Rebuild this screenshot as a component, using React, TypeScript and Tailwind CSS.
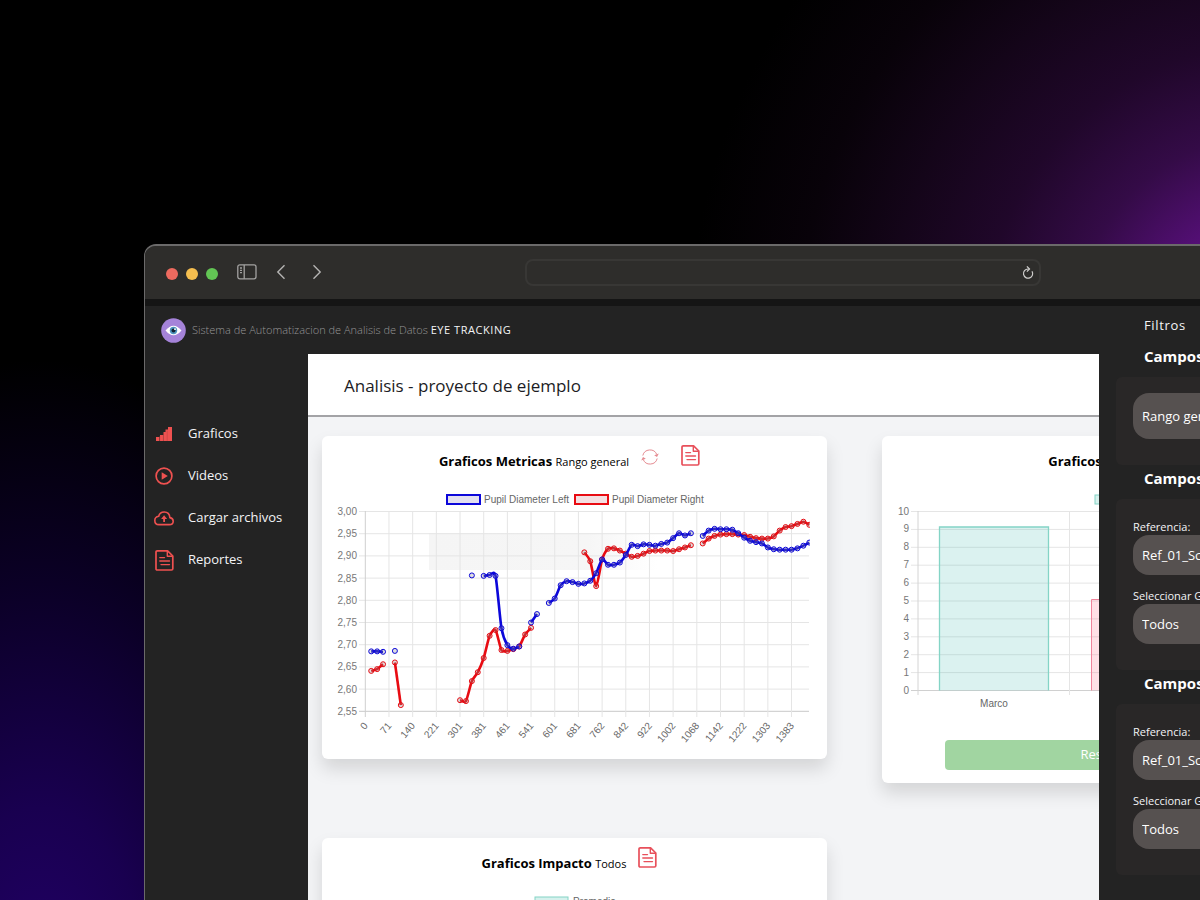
import React from "react";

type Point = [number, number];

const leftEye: Point[][] = [
  [[1, 2.685], [2, 2.685], [3, 2.684]],
  [[5, 2.686]],
  [[18, 2.856]],
  [[20, 2.855], [21, 2.857], [22, 2.855], [23, 2.737], [24, 2.699], [25, 2.691], [26, 2.696]],
  [[28, 2.75], [29, 2.769]],
  [[31, 2.794], [32, 2.804], [33, 2.834], [34, 2.843], [35, 2.841], [36, 2.837], [37, 2.838], [38, 2.844], [39, 2.861], [40, 2.892], [41, 2.88], [42, 2.88], [43, 2.885], [44, 2.902], [45, 2.925], [46, 2.922], [47, 2.926], [48, 2.925], [49, 2.923], [50, 2.927], [51, 2.93], [52, 2.94], [53, 2.951], [54, 2.946], [55, 2.951]],
  [[57, 2.945], [58, 2.957], [59, 2.961], [60, 2.96], [61, 2.96], [62, 2.959], [63, 2.951], [64, 2.941], [65, 2.934], [66, 2.931], [67, 2.928], [68, 2.919], [69, 2.915], [70, 2.914], [71, 2.914], [72, 2.914], [73, 2.917], [74, 2.923], [75, 2.93]],
];

const rightEye: Point[][] = [
  [[1, 2.641], [2, 2.645], [3, 2.656]],
  [[5, 2.66], [6, 2.564]],
  [[16, 2.575], [17, 2.573], [18, 2.618], [19, 2.638], [20, 2.67], [21, 2.72], [22, 2.733], [23, 2.688], [24, 2.686], [25, 2.69], [26, 2.696], [27, 2.723], [28, 2.738]],
  [[37, 2.908], [38, 2.888], [39, 2.832], [40, 2.892], [41, 2.916], [42, 2.917], [43, 2.912], [44, 2.905], [45, 2.898], [46, 2.9], [47, 2.905], [48, 2.911], [49, 2.912], [50, 2.912], [51, 2.912], [52, 2.911], [53, 2.915], [54, 2.919], [55, 2.924]],
  [[57, 2.928], [58, 2.939], [59, 2.945], [60, 2.948], [61, 2.949], [62, 2.949], [63, 2.948], [64, 2.947], [65, 2.943], [66, 2.94], [67, 2.939], [68, 2.939], [69, 2.944], [70, 2.957], [71, 2.965], [72, 2.967], [73, 2.972], [74, 2.977], [75, 2.97]],
];

const timeLabels = ["0", "71", "140", "221", "301", "381", "461", "541", "601", "681", "762", "842", "922", "1002", "1068", "1142", "1222", "1303", "1383"];
const diameterLabels = ["3,00", "2,95", "2,90", "2,85", "2,80", "2,75", "2,70", "2,65", "2,60", "2,55"];

const px = (i: number) => 43.3 + i * 5.92;
const py = (v: number) => 21.5 + (3 - v) * 444;

function curve(points: Point[]) {
  const p = points.map(([i, v]) => [px(i), py(v)]);
  let d = `M${p[0][0]} ${p[0][1]}`;
  for (let k = 0; k < p.length - 1; k++) {
    const a = p[Math.max(k - 1, 0)];
    const b = p[k];
    const c = p[k + 1];
    const e = p[Math.min(k + 2, p.length - 1)];
    const t = 0.12;
    d += ` C${b[0] + (c[0] - a[0]) * t} ${b[1] + (c[1] - a[1]) * t} ${c[0] - (e[0] - b[0]) * t} ${c[1] - (e[1] - b[1]) * t} ${c[0]} ${c[1]}`;
  }
  return d;
}

function Series({ data, color }: { data: Point[][]; color: string }) {
  return (
    <g stroke={color} fill="none" clipPath="url(#plot)">
      {data.map((part, k) => (
        <path key={k} d={curve(part)} strokeWidth="2.6" strokeLinejoin="round" />
      ))}
      {data.flat().map(([i, v]) => (
        <circle key={i} cx={px(i)} cy={py(v)} r="2.5" strokeWidth="1" fill="#8884" />
      ))}
    </g>
  );
}

const chartText = "font-['Liberation_Sans',Arial,sans-serif] text-[10px]";

function MetricsChart() {
  return (
    <svg viewBox="0 0 505 269" className={`block w-full ${chartText}`} role="img" aria-label="Pupil diameter">
      <defs>
        <clipPath id="plot"><rect x="40" y="15" width="448" height="210" /></clipPath>
        <linearGradient id="band" x1="0" x2="1" y1="0" y2="0">
          <stop offset="0" stopColor="#f5f5f5" />
          <stop offset="0.7" stopColor="#f6f6f6" />
          <stop offset="1" stopColor="#fff" />
        </linearGradient>
      </defs>
      <rect x="107" y="43" width="228" height="37" fill="url(#band)" />
      <g fill="#666">
        <rect x="125" y="5" width="33" height="9" fill="#e3e0f0" stroke="#0c07da" strokeWidth="2" />
        <text x="162" y="12.5">Pupil Diameter Left</text>
        <rect x="253" y="5" width="33" height="9" fill="#f3dfe1" stroke="#e80b12" strokeWidth="2" />
        <text x="290" y="12.5">Pupil Diameter Right</text>
      </g>
      {diameterLabels.map((label, k) => (
        <g key={label}>
          <path d={`M37 ${21.5 + k * 22.2}H487`} stroke={k === 9 ? "#c8c8c8" : "#e5e5e5"} />
          <text x="35" y={25 + k * 22.2} textAnchor="end" fill="#777">{label}</text>
        </g>
      ))}
      {timeLabels.map((label, k) => (
        <g key={label}>
          <path d={`M${px(k * 4)} 21V227`} stroke={k === 0 ? "#cfcfcf" : "#e5e5e5"} />
          <text transform={`translate(${px(k * 4) + 3} 236) rotate(-50)`} textAnchor="end" fill="#666">{label}</text>
        </g>
      ))}
      <Series data={rightEye} color="#e80b12" />
      <Series data={leftEye} color="#0c07da" />
    </svg>
  );
}

function AverageLegend({ x }: { x: number }) {
  return (
    <g>
      <rect x={x} y="5" width="33" height="9" fill="#d6f1ed" stroke="#84d4c6" />
      <text x={x + 38} y="12.5" fill="#666">Promedio</text>
    </g>
  );
}

function BarsChart() {
  return (
    <svg viewBox="0 0 505 232" className={`block w-full ${chartText}`} role="img" aria-label="Promedio">
      <AverageLegend x={213} />
      {Array.from({ length: 11 }, (_, k) => (
        <g key={k}>
          <path d={`M29 ${21.5 + k * 17.9}H490`} stroke={k === 10 ? "#d0d0d0" : "#e5e5e5"} />
          <text x="27" y={24.5 + k * 17.9} textAnchor="end" fill="#777">{10 - k}</text>
        </g>
      ))}
      <path d="M187.500 21V205M339.500 21V205" stroke="#e5e5e5" />
      <path d="M36 21V205" stroke="#d4d4d4" />
      <rect x="57.500" y="37" width="109" height="163.500" fill="#4bc0b333" />
      <path d="M57.500 200.500V37H166.500V200.500" fill="none" stroke="#84d4c6" strokeWidth="1.300" />
      <rect x="209.500" y="109.500" width="109" height="91" fill="#ff638433" />
      <path d="M209.500 200.500V109.500H318.500V200.500" fill="none" stroke="#f0839b" />
      <text x="112" y="217" textAnchor="middle" fill="#666">Marco</text>
    </svg>
  );
}

const ReportIcon = () => (
  <svg width="19" height="21" viewBox="0 0 19 21" fill="none" stroke="currentColor" strokeWidth="1.700" strokeLinejoin="round">
    <path d="M2.300 0.900H12.600L17.800 6V18.700Q17.800 20 16.500 20H2.300Q1 20 1 18.700V2.200Q1 0.900 2.300 0.900Z" />
    <path d="M12.300 1V6.300H17.600" strokeWidth="1.400" />
    <path d="M4.800 7.600H9.500M4.800 11H14.500M6 14.600H14.500" strokeWidth="1.400" strokeLinecap="round" />
  </svg>
);

const PlayIcon = () => (
  <svg width="18" height="18" viewBox="0 0 18 18" fill="none" stroke="currentColor" strokeWidth="1.700">
    <circle cx="9" cy="9" r="7.900" />
    <path d="M6.700 5.300L12.800 9L6.700 12.700Z" fill="currentColor" stroke="none" />
  </svg>
);

const CloudIcon = () => (
  <svg width="20" height="15" viewBox="0 0 20 15" fill="none" stroke="currentColor" strokeWidth="1.600" strokeLinejoin="round">
    <path d="M5 13.600H15.300C17.700 13.600 19.200 12.100 19.200 10.200C19.200 8.300 17.900 7 15.900 6.600C15.600 3.200 13.300 1 10.200 1C7.400 1 5.300 2.600 4.700 5.200C2.300 5.600 0.800 7.200 0.800 9.400C0.800 11.900 2.500 13.600 5 13.600Z" />
    <path d="M10.100 11V7" strokeWidth="1.800" />
    <path d="M10.100 4.300L13.100 8H7.100Z" fill="currentColor" stroke="none" />
  </svg>
);

const GraphIcon = () => (
  <svg width="16" height="14" viewBox="0 0 16 14" fill="#ef5150">
    <path d="M0 10h3.500v4H0zM4 8h3.300v6H4zM7.500 5h3.500v9H7.500zM9.500 2.500h3V14h-3zM12 0h4v14h-4z" />
    <path d="M3.700 9V14M7.400 6V14M11.200 3.500V14" stroke="#a33c3c" strokeWidth="0.400" />
  </svg>
);

function ReportButton() {
  return (
    <button type="button" aria-label="Generar reporte" className="pb-[11px] text-[#e8505b]">
      <ReportIcon />
    </button>
  );
}

function RefreshButton() {
  return (
    <button type="button" aria-label="Actualizar" className="pb-2">
      <svg width="18" height="18" viewBox="0 0 18 18" fill="none" stroke="#e58b91" strokeWidth="1">
        <path d="M1.800 7.500A7.400 7.400 0 0 1 15.800 6.500M16.200 10.500A7.400 7.400 0 0 1 2.200 11.500" />
        <path d="M17.800 5.500L16 9L13.200 7.200ZM0.200 12.500L2 9L4.800 10.800Z" fill="#e58b91" stroke="none" />
      </svg>
    </button>
  );
}

function Card({ title, note, actions, children }: { title: string; note: string; actions?: React.ReactNode; children: React.ReactNode }) {
  return (
    <section className="rounded-md bg-white shadow-[0_10px_18px_rgba(0,0,0,0.13)]">
      <div className="flex h-[54px] items-center justify-center pr-[10px] pb-1">
        <h2 className="text-[13px] leading-5 font-bold whitespace-nowrap text-black">
          {title} <span className="text-[11px] font-normal">{note}</span>
        </h2>
        {actions}
      </div>
      {children}
    </section>
  );
}

function FilterSelect({ label, option, tall }: { label?: string; option: string; tall?: boolean }) {
  return (
    <label className="block text-[11px] leading-4 text-gray-100">
      {label}
      <select
        aria-label={label ?? "Rango"}
        className={`block w-full appearance-none rounded-2xl bg-[#565150] px-[9px] text-[13px] text-white ${tall ? "h-[46px]" : "h-10"}`}
      >
        <option>{option}</option>
      </select>
    </label>
  );
}

function FilterGroup({ title, children }: { title: string; children: React.ReactNode }) {
  return (
    <section>
      <h3 className="h-[34px] pt-[3px] pl-7 text-[15px] leading-5 font-bold whitespace-nowrap text-white">{title}</h3>
      <div className="rounded-md bg-[#292727] px-[17px] pb-[26px]">{children}</div>
    </section>
  );
}

function FieldPair() {
  return (
    <div className="flex flex-col gap-[13px] pt-5">
      <FilterSelect label="Referencia:" option="Ref_01_Scene" />
      <FilterSelect label="Seleccionar Genero:" option="Todos" />
    </div>
  );
}

const navItems = [
  { label: "Graficos", icon: <GraphIcon /> },
  { label: "Videos", icon: <PlayIcon /> },
  { label: "Cargar archivos", icon: <CloudIcon /> },
  { label: "Reportes", icon: <ReportIcon /> },
];

function Toolbar() {
  return (
    <div className="grid h-[60px] grid-cols-[1fr_516px_1fr] border-b-[7px] border-[#151515] bg-[#2e2d2b]">
      <div className="flex items-center pb-[2px] pl-[21px]">
        <div className="flex gap-2 pt-1">
          <span className="size-3 rounded-full bg-[#ed6a5f]" />
          <span className="size-3 rounded-full bg-[#f5be4f]" />
          <span className="size-3 rounded-full bg-[#62c554]" />
        </div>
        <button type="button" aria-label="Barra lateral" className="ml-[19px]">
          <svg width="20" height="16" viewBox="0 0 20 16" fill="none" stroke="#a3a2a1" strokeWidth="1.300">
            <rect x="0.800" y="0.800" width="18.200" height="14" rx="2" />
            <path d="M7.200 1V15M3 4h2M3 6.300h2M3 8.600h2" />
          </svg>
        </button>
        <button type="button" aria-label="Atras" className="ml-[19px]">
          <svg width="10" height="16" viewBox="0 0 10 16" fill="none" stroke="#b5b4b3" strokeWidth="1.400">
            <path d="M8.500 1.300L1.800 8l6.700 6.700" />
          </svg>
        </button>
        <button type="button" aria-label="Adelante" className="ml-[26px]">
          <svg width="10" height="16" viewBox="0 0 10 16" fill="none" stroke="#b5b4b3" strokeWidth="1.400">
            <path d="M1.500 1.300L8.200 8l-6.700 6.700" />
          </svg>
        </button>
      </div>
      <div className="my-auto flex h-[27px] items-center rounded-lg border-2 border-[#383735] pr-1">
        <input aria-label="Direccion" className="min-w-0 flex-1 bg-transparent px-2 text-xs text-white outline-none" />
        <button type="button" aria-label="Recargar">
          <svg width="14" height="14" viewBox="0 0 14 14" fill="none" stroke="#cfcecd" strokeWidth="1.200">
            <path d="M11 5.200A4.600 4.600 0 1 1 7 3H8.300" />
            <path d="M5.900 0.400L8.500 3L5.900 5.600" />
          </svg>
        </button>
      </div>
    </div>
  );
}

function EyeLogo() {
  return (
    <svg width="25" height="25" viewBox="0 0 25 25">
      <circle cx="12.500" cy="12.500" r="12.300" fill="#a583d9" />
      <path d="M4.500 12.500Q12.500 3 20.500 12.500Q12.500 22 4.500 12.500Z" fill="#fff" />
      <circle cx="12.500" cy="12.500" r="3.700" fill="#4b94bd" />
      <circle cx="12.500" cy="12.500" r="2" fill="#122130" />
      <circle cx="14" cy="11.200" r="0.900" fill="#fff" />
    </svg>
  );
}

export default function App() {
  return (
    <div className="h-screen overflow-hidden bg-black bg-[radial-gradient(circle_at_1270px_330px,#7a1aa0_0px,#530f74_114px,#340b47_195px,#20072a_285px,#140519_380px,#080209_470px,transparent_580px),radial-gradient(ellipse_360px_640px_at_40px_1000px,#220068_0%,#190050_30%,#0b0026_65%,transparent_100%)] pt-[244px] pl-[144px] font-['Open_Sans','Noto_Sans',sans-serif]">
      <div className="-mr-[220px] flex h-full flex-col overflow-hidden rounded-tl-xl border-t-2 border-l border-[#6b6a6a] bg-[#232323]">
        <Toolbar />
        <div className="flex min-h-0 flex-1">
          <div className="flex min-w-0 flex-1 flex-col">
            <header className="flex h-12 shrink-0 items-center gap-[6px] pl-4">
              <EyeLogo />
              <p className="text-[11px] font-light text-[#969696]">
                Sistema de Automatizacion de Analisis de Datos{" "}
                <span className="font-normal tracking-wider text-gray-100">EYE TRACKING</span>
              </p>
            </header>
            <div className="flex min-h-0 flex-1">
              <nav className="w-[163px] shrink-0 pt-[59px]">
                {navItems.map((item) => (
                  <a key={item.label} href="#" className="flex h-[42px] items-center gap-[14px] pl-[9px] text-[13px] text-gray-100">
                    <span className="flex w-5 justify-center text-[#ef5150]">{item.icon}</span>
                    {item.label}
                  </a>
                ))}
              </nav>
              <main className="min-w-0 flex-1 overflow-hidden bg-[#f3f4f6]">
                <div className="flex h-[63px] items-center border-b-2 border-[#a3a3a6] bg-white pt-[2px] pl-9">
                  <h1 className="text-[17px] leading-6 text-[#1c1c24]">Analisis - proyecto de ejemplo</h1>
                </div>
                <div className="grid grid-cols-[505px_505px] items-start gap-[55px] px-[14px] pt-[19px]">
                  <Card
                    title="Graficos Metricas"
                    note="Rango general"
                    actions={
                      <div className="flex items-center gap-[22px] pl-3">
                        <RefreshButton />
                        <ReportButton />
                      </div>
                    }
                  >
                    <MetricsChart />
                  </Card>
                  <Card title="Graficos Media" note="Todos" actions={<div className="flex pl-3"><ReportButton /></div>}>
                    <BarsChart />
                    <div className="flex justify-center pt-[18px] pb-[13px]">
                      <button type="button" className="h-[30px] w-3/4 rounded bg-[#a1d5a1] text-[13px] text-white">
                        Restablecer datos
                      </button>
                    </div>
                  </Card>
                  <Card title="Graficos Impacto" note="Todos" actions={<div className="flex pl-3"><ReportButton /></div>}>
                    <svg viewBox="0 0 505 269" className={`block w-full ${chartText}`} role="img" aria-label="Promedio">
                      <AverageLegend x={213} />
                    </svg>
                  </Card>
                </div>
              </main>
            </div>
          </div>
          <aside className="w-[321px] shrink-0 pr-4 pl-[17px]">
            <h2 className="h-[37px] pt-[9px] pl-7 text-[13px] leading-5 tracking-wider text-gray-100">Filtros</h2>
            <FilterGroup title="Campos generales">
              <div className="pt-4">
                <FilterSelect option="Rango general" tall />
              </div>
            </FilterGroup>
            <FilterGroup title="Campos referencia">
              <FieldPair />
            </FilterGroup>
            <FilterGroup title="Campos comparar">
              <FieldPair />
            </FilterGroup>
          </aside>
        </div>
      </div>
    </div>
  );
}
